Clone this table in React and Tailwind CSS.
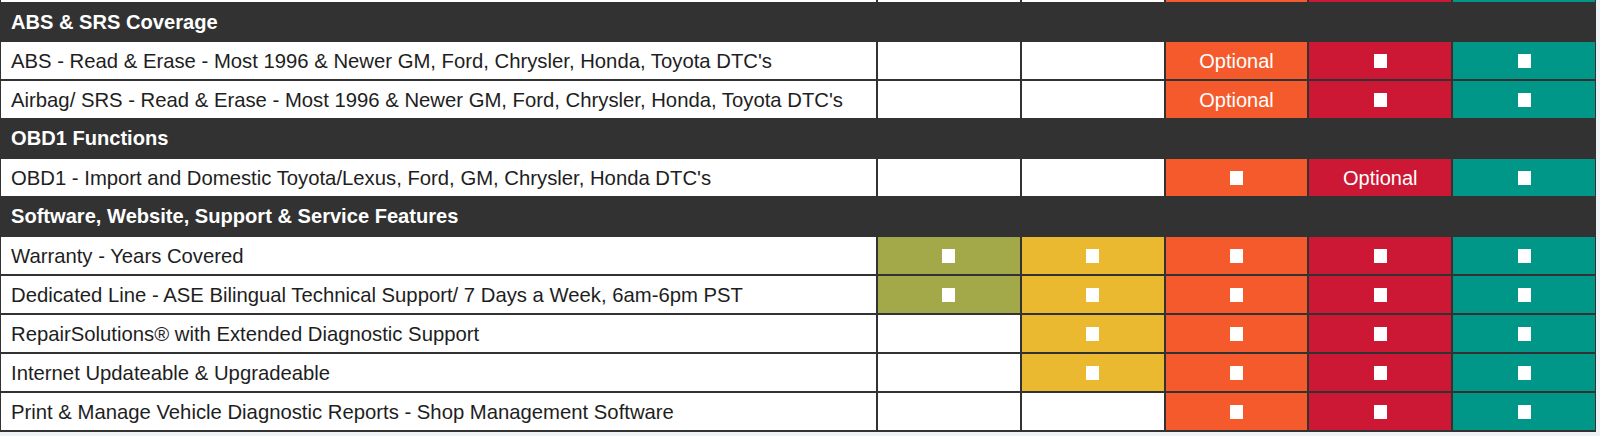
import React from "react";

const C = {
  o: "bg-[#f45a2c]",
  r: "bg-[#cc1834]",
  t: "bg-[#009688]",
  g: "bg-[#a3a849]",
  y: "bg-[#ebb930]",
  w: "bg-white",
};

const Sq = () => <div className="w-[13px] h-[14px] bg-white" />;

function Cell({ color, content }) {
  return (
    <div className={`${C[color]} flex items-center justify-center text-white text-[20px]`}>
      {content === "x" ? <Sq /> : content === "opt" ? "Optional" : null}
    </div>
  );
}

function Row({ label, cells }) {
  return (
    <div className="grid grid-cols-[875px_repeat(5,1fr)] gap-x-[2px] h-[37px]">
      <div className="bg-white flex items-center pl-[10px] pt-[2px] text-[20.3px] text-[#1e1e1e] whitespace-nowrap">
        {label}
      </div>
      {cells.map((c, i) => (
        <Cell key={i} color={c[0]} content={c[1]} />
      ))}
    </div>
  );
}

function Header({ label, h = "h-[37px]" }) {
  return (
    <div className={`${h} flex items-center pl-[10px] text-[20.1px] font-bold text-white whitespace-nowrap`}>
      {label}
    </div>
  );
}

const X = (c) => [c, "x"];
const E = ["w", ""];

export default function App() {
  return (
    <div
      className="w-[1600px] h-[436px] bg-[#eef2f5]"
      style={{ fontFamily: '"Liberation Sans", Arial, Helvetica, sans-serif' }}
    >
      <div className="w-[1596px] bg-[#323232] px-[1px] pb-[2px] flex flex-col gap-y-[2px]">
        <div className="grid grid-cols-[875px_repeat(5,1fr)] gap-x-[2px] h-[2px]">
          <div className="bg-white" />
          <div className="bg-white" />
          <div className="bg-white" />
          <div className="bg-[#f45a2c]" />
          <div className="bg-[#cc1834]" />
          <div className="bg-[#009688]" />
        </div>
        <Header label="ABS & SRS Coverage" h="h-[36px]" />
        <Row
          label="ABS - Read & Erase - Most 1996 & Newer GM, Ford, Chrysler, Honda, Toyota DTC's"
          cells={[E, E, ["o", "opt"], X("r"), X("t")]}
        />
        <Row
          label="Airbag/ SRS - Read & Erase - Most 1996 & Newer GM, Ford, Chrysler, Honda, Toyota DTC's"
          cells={[E, E, ["o", "opt"], X("r"), X("t")]}
        />
        <Header label="OBD1 Functions" />
        <Row
          label="OBD1 - Import and Domestic Toyota/Lexus, Ford, GM, Chrysler, Honda DTC's"
          cells={[E, E, X("o"), ["r", "opt"], X("t")]}
        />
        <Header label="Software, Website, Support & Service Features" />
        <Row
          label="Warranty - Years Covered"
          cells={[X("g"), X("y"), X("o"), X("r"), X("t")]}
        />
        <Row
          label="Dedicated Line - ASE Bilingual Technical Support/ 7 Days a Week, 6am-6pm PST"
          cells={[X("g"), X("y"), X("o"), X("r"), X("t")]}
        />
        <Row
          label="RepairSolutions® with Extended Diagnostic Support"
          cells={[E, X("y"), X("o"), X("r"), X("t")]}
        />
        <Row
          label="Internet Updateable & Upgradeable"
          cells={[E, X("y"), X("o"), X("r"), X("t")]}
        />
        <Row
          label="Print & Manage Vehicle Diagnostic Reports - Shop Management Software"
          cells={[E, E, X("o"), X("r"), X("t")]}
        />
      </div>
    </div>
  );
}
